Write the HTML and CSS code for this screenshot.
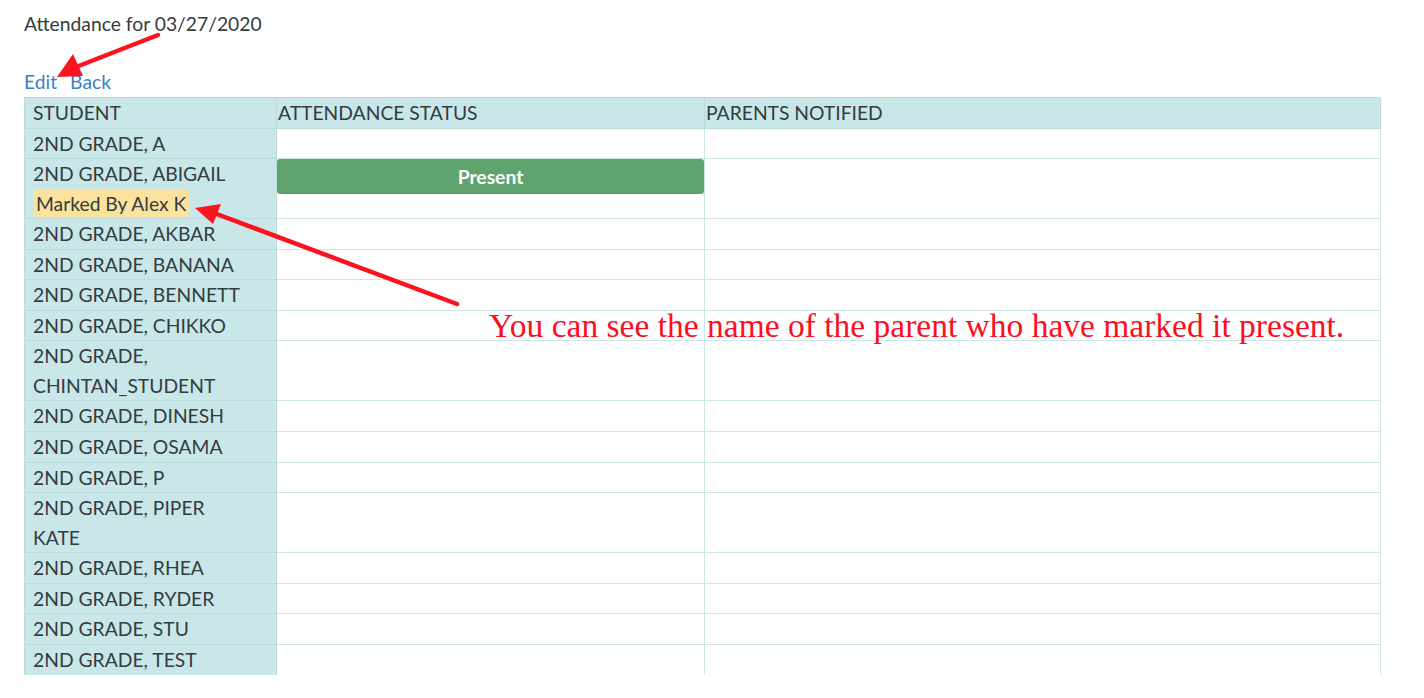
FILE: index.html
```html
<!DOCTYPE html>
<html>
<head>
<meta charset="utf-8">
<title>Attendance</title>
<link rel="stylesheet" href="styles.css">
</head>
<body>
<div class="page">
  <p class="title">Attendance for 03/27/2020</p>
  <div class="links"><a href="#" class="link">Edit</a><a href="#" class="link">Back</a></div>
  <table class="att">
    <colgroup><col class="c1"><col class="c2"><col class="c3"></colgroup>
    <thead>
      <tr><th>STUDENT</th><th>ATTENDANCE STATUS</th><th>PARENTS NOTIFIED</th></tr>
    </thead>
    <tbody>
      <tr><td class="name">2ND GRADE, A</td><td class="status"></td><td></td></tr>
      <tr><td class="name">2ND GRADE, ABIGAIL<br><span class="marked">Marked By Alex K</span></td><td class="status"><div class="present">Present</div></td><td></td></tr>
      <tr><td class="name">2ND GRADE, AKBAR</td><td class="status"></td><td></td></tr>
      <tr><td class="name">2ND GRADE, BANANA</td><td class="status"></td><td></td></tr>
      <tr><td class="name">2ND GRADE, BENNETT</td><td class="status"></td><td></td></tr>
      <tr><td class="name">2ND GRADE, CHIKKO</td><td class="status"></td><td></td></tr>
      <tr><td class="name">2ND GRADE,<br>CHINTAN_STUDENT</td><td class="status"></td><td></td></tr>
      <tr><td class="name">2ND GRADE, DINESH</td><td class="status"></td><td></td></tr>
      <tr><td class="name">2ND GRADE, OSAMA</td><td class="status"></td><td></td></tr>
      <tr><td class="name">2ND GRADE, P</td><td class="status"></td><td></td></tr>
      <tr><td class="name">2ND GRADE, PIPER<br>KATE</td><td class="status"></td><td></td></tr>
      <tr><td class="name">2ND GRADE, RHEA</td><td class="status"></td><td></td></tr>
      <tr><td class="name">2ND GRADE, RYDER</td><td class="status"></td><td></td></tr>
      <tr><td class="name">2ND GRADE, STU</td><td class="status"></td><td></td></tr>
      <tr class="last"><td class="name">2ND GRADE, TEST</td><td class="status"></td><td></td></tr>
    </tbody>
  </table>
  <p class="note">You can see the name of the parent who have marked it present.</p>
  <svg class="arrows" width="1424" height="698" viewBox="0 0 1424 698">
    <g stroke="#fb1420" stroke-width="4.5" stroke-linecap="round" fill="none">
      <line x1="158" y1="35" x2="76" y2="67"/>
      <line x1="457" y1="304" x2="214" y2="213"/>
    </g>
    <g fill="#fb1420">
      <polygon points="57,77 73,54 83,76"/>
      <polygon points="195,208 221,204 213,224"/>
    </g>
  </svg>
</div>
</body>
</html>
```

FILE: styles.css
```css
html, body {
  margin: 0;
  padding: 0;
  background: #fff;
}
.page {
  position: relative;
  width: 1424px;
  height: 698px;
  overflow: hidden;
  padding: 0 0 0 24px;
  box-sizing: border-box;
  font-family: Lato, "Open Sans", sans-serif;
  color: #333c40;
}
.title {
  margin: 0;
  padding-top: 12px;
  font-size: 19.3px;
  line-height: 24px;
}
.links {
  margin: 35px 0 4px;
  display: flex;
  gap: 13px;
  font-size: 19.3px;
  line-height: 22px;
}
.link {
  color: #3d7fc1;
  text-decoration: none;
}
.att {
  border-collapse: collapse;
  table-layout: fixed;
  width: 1356px;
  font-size: 19.3px;
  line-height: 29.5px;
}
.c1 { width: 252px; }
.c2 { width: 428px; }
.c3 { width: 676px; }
.att th {
  background: #c9e7e8;
  font-weight: normal;
  text-align: left;
  padding: 0 0 0 1px;
  border: 1px solid #b9dbdb;
  white-space: nowrap;
  height: 29.5px;
}
.att th:first-child {
  padding-left: 8px;
}
.att td {
  border: 1px solid #cde5e5;
  padding: 0 8px;
  vertical-align: top;
  height: 29.6px;
}
.att td.name {
  background: #c9e7e8;
  border-color: #b9dbdb;
  white-space: nowrap;
}
.att td.status {
  padding: 0;
}
.att tr.last td {
  border-bottom: none;
}
.marked {
  background: #fbe39f;
  border-radius: 3px;
  padding: 2px 3px;
}
.present {
  background: #5fa46e;
  color: #fff;
  font-weight: bold;
  text-align: center;
  height: 35px;
  line-height: 35px;
  border-radius: 3px;
}
.note {
  position: absolute;
  left: 489px;
  top: 306px;
  margin: 0;
  font-family: "Liberation Serif", "Times New Roman", serif;
  font-size: 33.5px;
  line-height: 40px;
  color: #fb0f1e;
  white-space: nowrap;
}
.arrows {
  position: absolute;
  left: 0;
  top: 0;
}
```
